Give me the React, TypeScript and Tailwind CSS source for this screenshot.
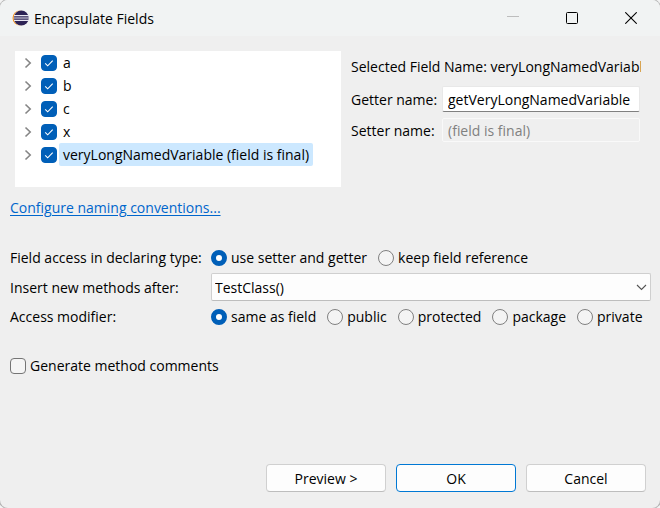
import { useState } from "react";

const fields = ["a", "b", "c", "x", "veryLongNamedVariable (field is final)"];
const accessOptions = ["use setter and getter", "keep field reference"];
const modifiers = ["same as field", "public", "protected", "package", "private"];

function EclipseLogo() {
  return (
    <svg width="18" height="16" viewBox="0 0 18 16" aria-hidden="true">
      <circle cx="8" cy="8" r="7.5" fill="#f7941e" />
      <circle cx="9.5" cy="8" r="7.8" fill="#f4f4f6" />
      <circle cx="9.3" cy="8" r="7.5" fill="#2c2255" />
      <path d="M2 5.7h15.2M1.8 8h15.8M2 10.3h15.2" stroke="#e9e7f2" strokeWidth="1.2" />
    </svg>
  );
}

function Check({
  label,
  checked,
  onChange,
  textClass,
}: {
  label: string;
  checked: boolean;
  onChange: () => void;
  textClass: string;
}) {
  return (
    <label className="flex items-center">
      <span className="grid shrink-0 place-items-center">
        <input
          type="checkbox"
          checked={checked}
          onChange={onChange}
          className="col-start-1 row-start-1 size-4 appearance-none rounded-[4px] border border-[#757575] bg-[#f5f5f5] checked:border-[#005fb8] checked:bg-[#005fb8]"
        />
        {checked && (
          <svg className="pointer-events-none col-start-1 row-start-1" width="16" height="16" viewBox="0 0 16 16" fill="none">
            <path d="M4.2 8.3l2.5 2.5 5-5.2" stroke="#fff" strokeWidth="1.1" />
          </svg>
        )}
      </span>
      <span className={textClass}>{label}</span>
    </label>
  );
}

function RadioGroup({ name, options }: { name: string; options: string[] }) {
  const [value, setValue] = useState(options[0]);
  return (
    <div role="radiogroup" aria-label={name} className="flex items-center gap-[11px]">
      {options.map((o) => (
        <label key={o} className="flex items-center gap-1 whitespace-nowrap">
          <input
            type="radio"
            name={name}
            checked={value === o}
            onChange={() => setValue(o)}
            className="size-4 shrink-0 appearance-none rounded-full border border-[#808080] bg-[#f4f4f4] checked:border-5 checked:border-[#005fb8] checked:bg-white"
          />
          {o}
        </label>
      ))}
    </div>
  );
}

const pushButton = "h-7 w-[120px] rounded-[4px] border bg-[#fdfdfd] text-center";

export default function App() {
  const [ticked, setTicked] = useState<string[]>(fields);
  const [comments, setComments] = useState(false);
  const toggle = (f: string) =>
    setTicked((t) => (t.includes(f) ? t.filter((v) => v !== f) : [...t, f]));

  return (
    <div className="min-h-screen overflow-hidden bg-[#f3f3f3] font-['Open_Sans','Noto_Sans',sans-serif] text-[14px] leading-[23px] text-black">
      <main className="flex min-h-screen flex-col overflow-hidden rounded-lg bg-[#efefef] shadow-[0_0_0_1px_#b5b5b5]">
        <header className="flex h-9 items-center bg-[#f1f3f3] pl-3">
          <EclipseLogo />
          <h1 className="ml-1">Encapsulate Fields</h1>
          <div className="ml-auto flex">
            <button aria-label="Minimize" disabled className="grid h-9 w-[59px] place-items-center">
              <svg width="12" height="12" viewBox="0 0 12 12"><path d="M0 4.500h12" stroke="#bdbdbd" /></svg>
            </button>
            <button aria-label="Maximize" className="grid h-9 w-[59px] place-items-center">
              <svg width="12" height="12" viewBox="0 0 12 12"><rect x=".5" y=".5" width="11" height="11" rx="1" fill="none" stroke="#000" /></svg>
            </button>
            <button aria-label="Close" className="grid h-9 w-[59px] place-items-center">
              <svg width="12" height="12" viewBox="0 0 12 12"><path d="M.3.3l11.4 11.4M11.7.3L.3 11.7" stroke="#000" strokeWidth="1.1" /></svg>
            </button>
          </div>
        </header>

        <section className="grid grid-cols-[326fr_290fr] gap-2.5 pt-[15px] pr-[19px] pl-[15px]">
          <ul className="h-[136px] overflow-hidden bg-white">
            {fields.map((f) => (
              <li key={f} className="flex h-[23px] items-center whitespace-nowrap">
                <button aria-label={`Expand ${f}`} className="grid h-[23px] w-[26px] place-items-center">
                  <svg width="8" height="12" viewBox="0 0 8 12" fill="none"><path d="M1.5 1.5L6.200 6l-4.700 4.500" stroke="#858585" strokeWidth="1.6" /></svg>
                </button>
                <Check
                  label={f}
                  checked={ticked.includes(f)}
                  onChange={() => toggle(f)}
                  textClass={f === fields[4] ? "ml-0.5 rounded-[2px] bg-[#cce8ff] px-1" : "ml-0.5 px-1"}
                />
              </li>
            ))}
          </ul>
          <div className="min-w-0 pt-1">
            <p className="overflow-hidden whitespace-nowrap">Selected Field Name: veryLongNamedVariable</p>
            <div className="mt-2 grid grid-cols-[91px_1fr] items-center gap-y-1.5 pr-px">
              <label htmlFor="getter" className="whitespace-nowrap">Getter name:</label>
              <input
                id="getter"
                defaultValue="getVeryLongNamedVariable"
                className="h-[26px] w-full min-w-0 rounded-[2px] border border-[#e8e8e8] border-b-[#808080] bg-white pl-[5px]"
              />
              <label htmlFor="setter" className="whitespace-nowrap">Setter name:</label>
              <input
                id="setter"
                disabled
                defaultValue="(field is final)"
                className="h-6 w-full min-w-0 rounded-[2px] border border-[#f9f9f9] bg-[#efefef] pl-[5px] text-[#808080]"
              />
            </div>
          </div>
        </section>

        <div className="mt-[9px] px-2.5">
          <a href="#naming" className="text-[#0066cc] underline underline-offset-2">Configure naming conventions...</a>
        </div>

        <section className="mt-[27px] grid grid-cols-[201px_1fr] items-center gap-y-1 pr-[9px] pl-2.5">
          <span className="whitespace-nowrap">Field access in declaring type:</span>
          <RadioGroup name="Field access in declaring type" options={accessOptions} />
          <label htmlFor="insert">Insert new methods after:</label>
          <div className="grid items-center">
            <select id="insert" className="col-start-1 row-start-1 h-7 w-full appearance-none rounded-[2px] border border-[#cfcfcf] border-b-[#bdbdbd] bg-[#fdfdfd] pl-[3px]">
              <option>TestClass()</option>
            </select>
            <svg className="pointer-events-none col-start-1 row-start-1 mr-1 justify-self-end" width="11" height="7" viewBox="0 0 11 7" fill="none">
              <path d="M1 1l4.500 4.500L10 1" stroke="#555" strokeWidth="1.1" />
            </svg>
          </div>
          <span>Access modifier:</span>
          <RadioGroup name="Access modifier" options={modifiers} />
        </section>

        <div className="mt-[26px] px-2.5">
          <Check
            label="Generate method comments"
            checked={comments}
            onChange={() => setComments(!comments)}
            textClass="ml-1"
          />
        </div>

        <footer className="mt-auto flex justify-end gap-2.5 pr-3.5 pb-4">
          <button className={`${pushButton} border-[#d0d0d0] border-b-[#bdbdbd]`}>Preview &gt;</button>
          <button className={`${pushButton} border-[#0078d4]`}>OK</button>
          <button className={`${pushButton} border-[#d0d0d0] border-b-[#bdbdbd]`}>Cancel</button>
        </footer>
      </main>
    </div>
  );
}
